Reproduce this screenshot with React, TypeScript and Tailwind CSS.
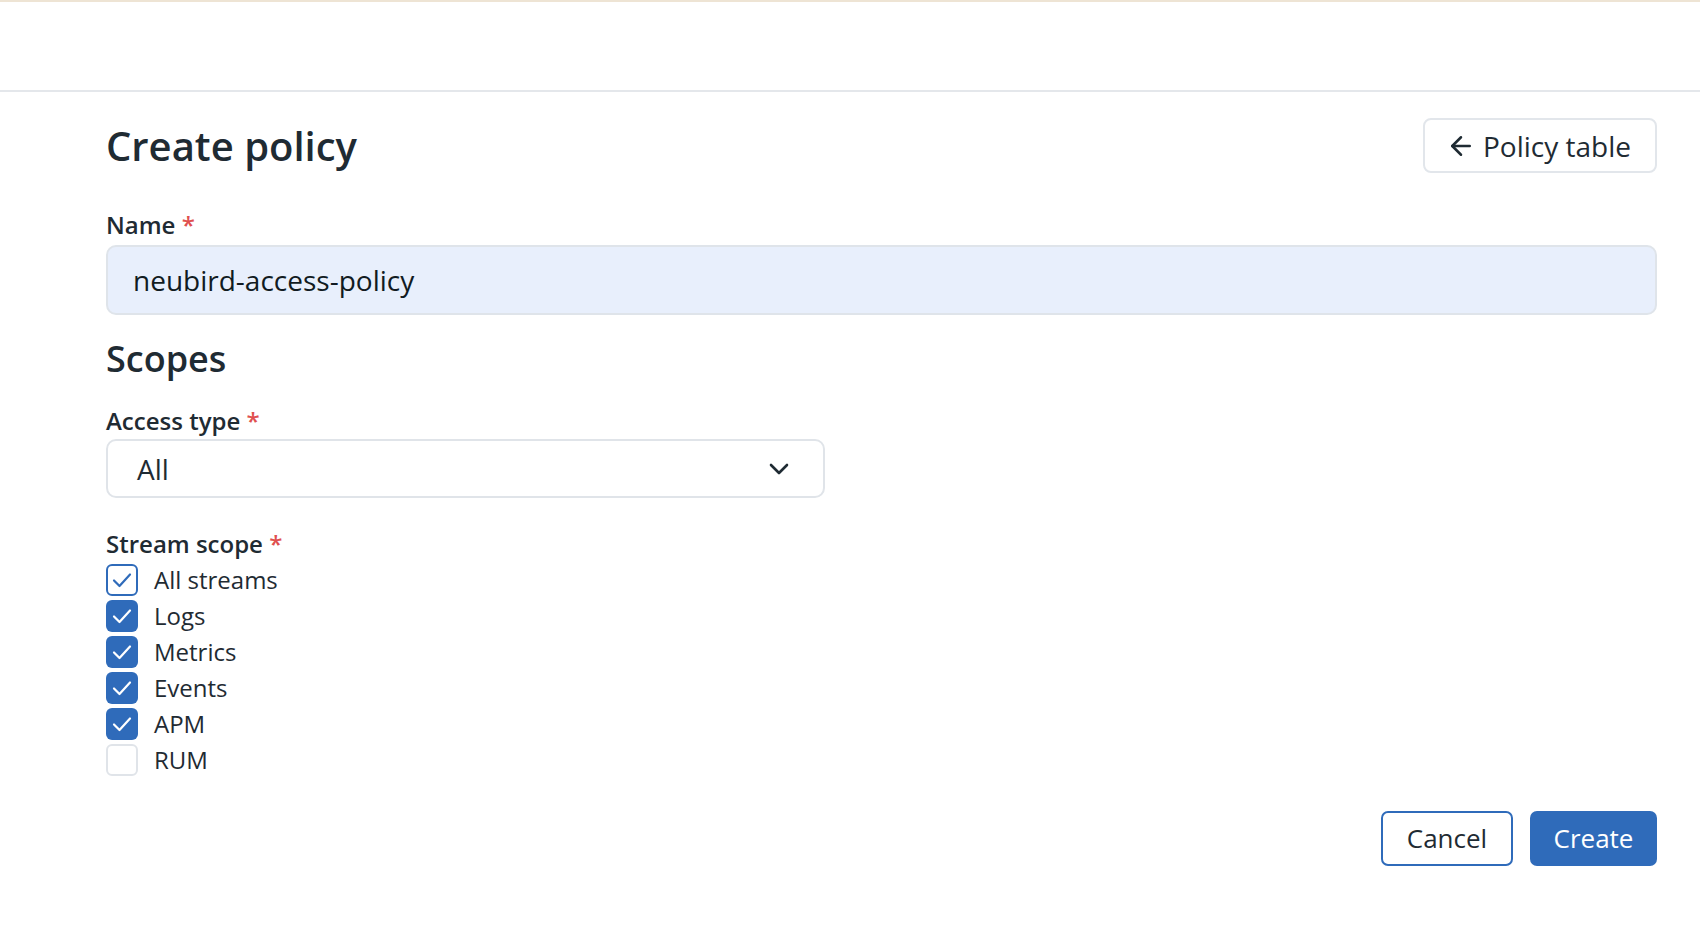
import React from 'react';
import { ArrowLeft } from 'lucide-react';

const streams = [
  { label: 'All streams', state: 'outline' },
  { label: 'Logs', state: 'on' },
  { label: 'Metrics', state: 'on' },
  { label: 'Events', state: 'on' },
  { label: 'APM', state: 'on' },
  { label: 'RUM', state: 'off' },
];

const Check: React.FC<{ color: string }> = ({ color }) => (
  <svg width="28" height="28" viewBox="0 0 28 28" fill="none">
    <polyline points="6,14.5 11.5,20 22,8.5" stroke={color} strokeWidth="2.2" strokeLinecap="round" strokeLinejoin="round" />
  </svg>
);

const StreamBox: React.FC<{ state: string }> = ({ state }) => {
  if (state === 'on') {
    return (
      <span className="w-[32px] h-[32px] rounded-[6px] bg-[#2f6bba] flex items-center justify-center">
        <Check color="#ffffff" />
      </span>
    );
  }
  if (state === 'outline') {
    return (
      <span className="w-[32px] h-[32px] rounded-[6px] border-2 border-[#2f6bba] bg-white flex items-center justify-center">
        <Check color="#2f6bba" />
      </span>
    );
  }
  return <span className="w-[32px] h-[32px] rounded-[6px] border-2 border-[#e0e4e9] bg-white" />;
};

const Label: React.FC<{ text: string }> = ({ text }) => (
  <div className="text-[24px] leading-[32px] font-semibold text-[#1f2b33]">
    {text} <span className="text-[#e0504f]">*</span>
  </div>
);

export default function App() {
  return (
    <div className="min-h-screen bg-white text-[#1f2b33]" style={{ fontFamily: '"Open Sans", "Noto Sans", sans-serif' }}>
      <div className="h-[2px] bg-[#eee4d4]" />
      <div className="h-[90px] border-b-2 border-[#e4e7eb]" />

      <main className="pl-[106px] pr-[43px] pt-[26px]">
        <div className="flex items-center justify-between">
          <h1 className="text-[40px] leading-[55px] font-semibold">Create policy</h1>
          <button className="h-[55px] flex items-center gap-[7px] pl-[21px] pr-[24px] rounded-[8px] border-2 border-[#e2e6eb] bg-white text-[28px] text-[#1f2b33]">
            <ArrowLeft size={30} strokeWidth={2} />
            Policy table
          </button>
        </div>

        <div className="mt-[36px]">
          <Label text="Name" />
          <div className="mt-[4px] h-[70px] rounded-[10px] border-2 border-[#dfe4ea] bg-[#e8effc] flex items-center pl-[25px] text-[28px] text-[#111b22]">
            neubird-access-policy
          </div>
        </div>

        <h2 className="mt-[22px] text-[36px] leading-[44px] font-semibold">Scopes</h2>

        <div className="mt-[24px]">
          <Label text="Access type" />
          <div className="mt-[2px] w-[719px] h-[59px] rounded-[10px] border-2 border-[#e0e4e9] bg-white flex items-center justify-between pl-[29px] pr-[34px] text-[28px]">
            <span>All</span>
            <svg width="20" height="12" viewBox="0 0 20 12" fill="none">
              <polyline points="2,2 10,10 18,2" stroke="#1f2b33" strokeWidth="2.6" strokeLinecap="round" strokeLinejoin="round" />
            </svg>
          </div>
        </div>

        <div className="mt-[30px]">
          <Label text="Stream scope" />
          <div className="mt-[2px] flex flex-col">
            {streams.map((s) => (
              <div key={s.label} className="h-[36px] flex items-center gap-[16px]">
                <StreamBox state={s.state} />
                <span className="text-[24px] leading-[32px]">{s.label}</span>
              </div>
            ))}
          </div>
        </div>

        <div className="mt-[33px] flex justify-end gap-[17px]">
          <button className="h-[55px] w-[132px] rounded-[7px] border-2 border-[#2f6bba] bg-white text-[26px] text-[#1f2b33]">
            Cancel
          </button>
          <button className="h-[55px] w-[127px] rounded-[7px] bg-[#2f6bba] text-[26px] text-white">
            Create
          </button>
        </div>
      </main>
    </div>
  );
}
